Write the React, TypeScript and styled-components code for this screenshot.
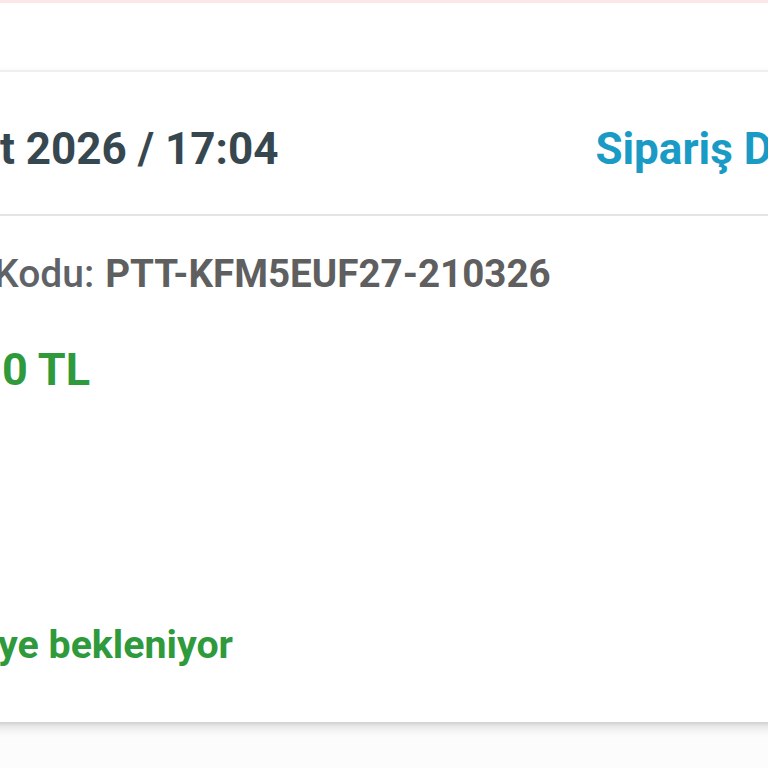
import React from "react";
import styled, { createGlobalStyle } from "styled-components";

const Global = createGlobalStyle`
  html, body {
    margin: 0;
    padding: 0;
    background: #ffffff;
    font-family: Roboto, "Noto Sans", "Liberation Sans", sans-serif;
  }
  #root {
    width: 768px;
    height: 768px;
    overflow: hidden;
  }
`;

const Page = styled.div`
  width: 768px;
  height: 768px;
  overflow: hidden;
  display: flex;
  flex-direction: column;
  background: #fcfcfc;
`;

const TopStrip = styled.div`
  height: 3px;
  background: #fbe6ea;
  flex: none;
`;

const TopArea = styled.div`
  height: 67px;
  background: #ffffff;
  flex: none;
`;

const Card = styled.section`
  flex: none;
  width: 1100px;
  margin-left: -40px;
  background: #ffffff;
  border-top: 2px solid #efefef;
  box-shadow: 0 6px 10px rgba(0, 0, 0, 0.12), 0 2px 3px rgba(0, 0, 0, 0.08);
`;

const Header = styled.header`
  height: 144px;
  box-sizing: border-box;
  padding-top: 12px;
  display: flex;
  align-items: center;
  gap: 317px;
  padding-left: 40px;
  border-bottom: 2px solid #e4e4e4;
`;

const DateText = styled.span`
  font-size: 44px;
  font-weight: 700;
  color: #37474f;
  white-space: nowrap;
`;

const DetailLink = styled.a`
  font-size: 44px;
  font-weight: 700;
  color: #1a9bc6;
  text-decoration: none;
  white-space: nowrap;
`;

const Body = styled.div`
  display: flex;
  flex-direction: column;
  padding: 35px 0 54px 40px;
`;

const Row = styled.div<{ $gap?: number }>`
  display: flex;
  align-items: baseline;
  gap: 11px;
  margin-top: ${(p) => p.$gap ?? 0}px;
  white-space: nowrap;
`;

const Label = styled.span`
  font-size: 39px;
  font-weight: 500;
  color: #5f6368;
  margin-left: -6px;
`;

const CodeValue = styled.span`
  font-size: 38.6px;
  font-weight: 700;
  color: #5f5f5f;
`;

const Amount = styled.span`
  font-size: 45px;
  font-weight: 700;
  color: #2e9a3c;
  margin-left: 2px;
`;

const Status = styled.span`
  font-size: 39.3px;
  font-weight: 700;
  color: #2e9a3c;
  margin-left: -2px;
`;

export default function App() {
  return (
    <>
      <Global />
      <Page>
        <TopStrip />
        <TopArea />
        <Card>
          <Header>
            <DateText>t 2026 / 17:04</DateText>
            <DetailLink href="#">Sipariş Detayı</DetailLink>
          </Header>
          <Body>
            <Row>
              <Label>Kodu:</Label>
              <CodeValue>PTT-KFM5EUF27-210326</CodeValue>
            </Row>
            <Row $gap={46}>
              <Amount>0 TL</Amount>
            </Row>
            <Row $gap={226}>
              <Status>ye bekleniyor</Status>
            </Row>
          </Body>
        </Card>
      </Page>
    </>
  );
}
